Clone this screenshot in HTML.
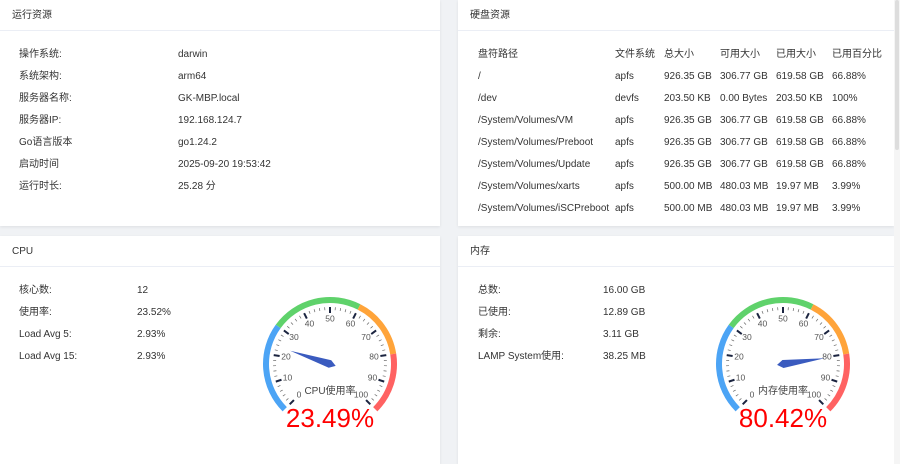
<!DOCTYPE html>
<html><head><meta charset="utf-8">
<style>
*{margin:0;padding:0;box-sizing:border-box}
body{width:900px;height:464px;background:#f0f2f5;font-family:"Liberation Sans","Noto Sans CJK SC",sans-serif;font-size:10px;color:#333;position:relative;overflow:hidden}
.card{position:absolute;background:#fff;box-shadow:0 1px 3px rgba(0,0,0,.08)}
.hd{height:31px;border-bottom:1px solid #ebeef5;padding-left:12px;padding-top:2px;line-height:28px;font-size:10px;color:#333}
.t{position:absolute;white-space:nowrap;line-height:12px;margin-top:2px}
.sb{position:absolute;left:894px;top:0;width:6px;height:464px;background:#f5f5f5}
.sb div{position:absolute;left:1px;top:0;width:4px;height:150px;background:#ddd;border-radius:2px}
</style></head><body>
<div class="card" style="left:0;top:0;width:440px;height:226px"><div class="hd">运行资源</div></div>
<div class="card" style="left:458px;top:0;width:436px;height:226px"><div class="hd">硬盘资源</div></div>
<div class="card" style="left:0;top:236px;width:440px;height:228px"><div class="hd">CPU</div></div>
<div class="card" style="left:458px;top:236px;width:436px;height:228px"><div class="hd">内存</div></div>
<div class="sb"><div></div></div>

<div class="t" style="left:19px;top:47px">操作系统:</div><div class="t" style="left:178px;top:47px">darwin</div>
<div class="t" style="left:19px;top:69px">系统架构:</div><div class="t" style="left:178px;top:69px">arm64</div>
<div class="t" style="left:19px;top:91px">服务器名称:</div><div class="t" style="left:178px;top:91px">GK-MBP.local</div>
<div class="t" style="left:19px;top:113px">服务器IP:</div><div class="t" style="left:178px;top:113px">192.168.124.7</div>
<div class="t" style="left:19px;top:135px">Go语言版本</div><div class="t" style="left:178px;top:135px">go1.24.2</div>
<div class="t" style="left:19px;top:157px">启动时间</div><div class="t" style="left:178px;top:157px">2025-09-20 19:53:42</div>
<div class="t" style="left:19px;top:179px">运行时长:</div><div class="t" style="left:178px;top:179px">25.28 分</div>

<div class="t" style="left:478px;top:47px">盘符路径</div><div class="t" style="left:615px;top:47px">文件系统</div><div class="t" style="left:664px;top:47px">总大小</div><div class="t" style="left:720px;top:47px">可用大小</div><div class="t" style="left:776px;top:47px">已用大小</div><div class="t" style="left:832px;top:47px">已用百分比</div>
<div class="t" style="left:478px;top:69px">/</div><div class="t" style="left:615px;top:69px">apfs</div><div class="t" style="left:664px;top:69px">926.35 GB</div><div class="t" style="left:720px;top:69px">306.77 GB</div><div class="t" style="left:776px;top:69px">619.58 GB</div><div class="t" style="left:832px;top:69px">66.88%</div>
<div class="t" style="left:478px;top:91px">/dev</div><div class="t" style="left:615px;top:91px">devfs</div><div class="t" style="left:664px;top:91px">203.50 KB</div><div class="t" style="left:720px;top:91px">0.00 Bytes</div><div class="t" style="left:776px;top:91px">203.50 KB</div><div class="t" style="left:832px;top:91px">100%</div>
<div class="t" style="left:478px;top:113px">/System/Volumes/VM</div><div class="t" style="left:615px;top:113px">apfs</div><div class="t" style="left:664px;top:113px">926.35 GB</div><div class="t" style="left:720px;top:113px">306.77 GB</div><div class="t" style="left:776px;top:113px">619.58 GB</div><div class="t" style="left:832px;top:113px">66.88%</div>
<div class="t" style="left:478px;top:135px">/System/Volumes/Preboot</div><div class="t" style="left:615px;top:135px">apfs</div><div class="t" style="left:664px;top:135px">926.35 GB</div><div class="t" style="left:720px;top:135px">306.77 GB</div><div class="t" style="left:776px;top:135px">619.58 GB</div><div class="t" style="left:832px;top:135px">66.88%</div>
<div class="t" style="left:478px;top:157px">/System/Volumes/Update</div><div class="t" style="left:615px;top:157px">apfs</div><div class="t" style="left:664px;top:157px">926.35 GB</div><div class="t" style="left:720px;top:157px">306.77 GB</div><div class="t" style="left:776px;top:157px">619.58 GB</div><div class="t" style="left:832px;top:157px">66.88%</div>
<div class="t" style="left:478px;top:179px">/System/Volumes/xarts</div><div class="t" style="left:615px;top:179px">apfs</div><div class="t" style="left:664px;top:179px">500.00 MB</div><div class="t" style="left:720px;top:179px">480.03 MB</div><div class="t" style="left:776px;top:179px">19.97 MB</div><div class="t" style="left:832px;top:179px">3.99%</div>
<div class="t" style="left:478px;top:201px">/System/Volumes/iSCPreboot</div><div class="t" style="left:615px;top:201px">apfs</div><div class="t" style="left:664px;top:201px">500.00 MB</div><div class="t" style="left:720px;top:201px">480.03 MB</div><div class="t" style="left:776px;top:201px">19.97 MB</div><div class="t" style="left:832px;top:201px">3.99%</div>

<div class="t" style="left:19px;top:283px">核心数:</div><div class="t" style="left:137px;top:283px">12</div>
<div class="t" style="left:19px;top:305px">使用率:</div><div class="t" style="left:137px;top:305px">23.52%</div>
<div class="t" style="left:19px;top:327px">Load Avg 5:</div><div class="t" style="left:137px;top:327px">2.93%</div>
<div class="t" style="left:19px;top:349px">Load Avg 15:</div><div class="t" style="left:137px;top:349px">2.93%</div>

<div class="t" style="left:478px;top:283px">总数:</div><div class="t" style="left:603px;top:283px">16.00 GB</div>
<div class="t" style="left:478px;top:305px">已使用:</div><div class="t" style="left:603px;top:305px">12.89 GB</div>
<div class="t" style="left:478px;top:327px">剩余:</div><div class="t" style="left:603px;top:327px">3.11 GB</div>
<div class="t" style="left:478px;top:349px">LAMP System使用:</div><div class="t" style="left:603px;top:349px">38.25 MB</div>

<svg width="900" height="464" style="position:absolute;left:0;top:0" font-family="Liberation Sans, Noto Sans CJK SC, sans-serif">
<g id="g1" transform="translate(330,364)">
<g id="a1"></g>
<g font-size="8.5" fill="#555" text-anchor="middle" dominant-baseline="middle">
<text x="-31" y="31">0</text><text x="-42.5" y="14">10</text><text x="-44" y="-7">20</text><text x="-36" y="-26.5">30</text><text x="-20.5" y="-40">40</text><text x="0" y="-45">50</text><text x="20.5" y="-40">60</text><text x="36" y="-26.5">70</text><text x="44" y="-7">80</text><text x="42.5" y="14">90</text><text x="31" y="31">100</text>
</g>
<text x="0" y="30" font-size="10" fill="#444" text-anchor="middle">CPU使用率</text>
<text x="0" y="63" font-size="26" fill="#f00" text-anchor="middle">23.49%</text>
</g>
<g id="g2" transform="translate(783,364)">
<g id="a2"></g>
<g font-size="8.5" fill="#555" text-anchor="middle" dominant-baseline="middle">
<text x="-31" y="31">0</text><text x="-42.5" y="14">10</text><text x="-44" y="-7">20</text><text x="-36" y="-26.5">30</text><text x="-20.5" y="-40">40</text><text x="0" y="-45">50</text><text x="20.5" y="-40">60</text><text x="36" y="-26.5">70</text><text x="44" y="-7">80</text><text x="42.5" y="14">90</text><text x="31" y="31">100</text>
</g>
<text x="0" y="30" font-size="10" fill="#444" text-anchor="middle">内存使用率</text>
<text x="0" y="63" font-size="26" fill="#f00" text-anchor="middle">80.42%</text>
</g>
</svg>
<script>
function draw(id,val){
 var g=document.getElementById(id),s='',R=64;
 function ang(v){return (225-2.7*v)*Math.PI/180}
 function pt(v,r){var a=ang(v);return [r*Math.cos(a),-r*Math.sin(a)]}
 var segs=[[0,30,'#4ca4f5'],[30,60,'#5fd26b'],[60,80,'#ffa43a'],[80,100,'#ff6262']];
 segs.forEach(function(q){var p1=pt(q[0],R),p2=pt(q[1],R);var lg=(q[1]-q[0])*2.7>180?1:0;
  s+='<path d="M'+p1[0]+' '+p1[1]+' A'+R+' '+R+' 0 '+lg+' 1 '+p2[0]+' '+p2[1]+'" fill="none" stroke="'+q[2]+'" stroke-width="6"/>';});
 for(var v=0;v<=100;v+=2){var maj=v%10==0;var a=pt(v,57),b=pt(v,maj?51:54);
  s+='<line x1="'+a[0]+'" y1="'+a[1]+'" x2="'+b[0]+'" y2="'+b[1]+'" stroke="'+(maj?'#1b2440':'#666')+'" stroke-width="'+(maj?2:0.7)+'"/>';}
 var t=pt(val,42),an=ang(val),px=Math.sin(an)*4,py=Math.cos(an)*4,bk=pt(val,-6);
 s+='<polygon points="'+t[0]+','+t[1]+' '+px+','+py+' '+bk[0]+','+bk[1]+' '+(-px)+','+(-py)+'" fill="#3a5bbf"/>';
 g.innerHTML=s;
}
draw('a1',23.49);draw('a2',80.42);
</script>
</body></html>
